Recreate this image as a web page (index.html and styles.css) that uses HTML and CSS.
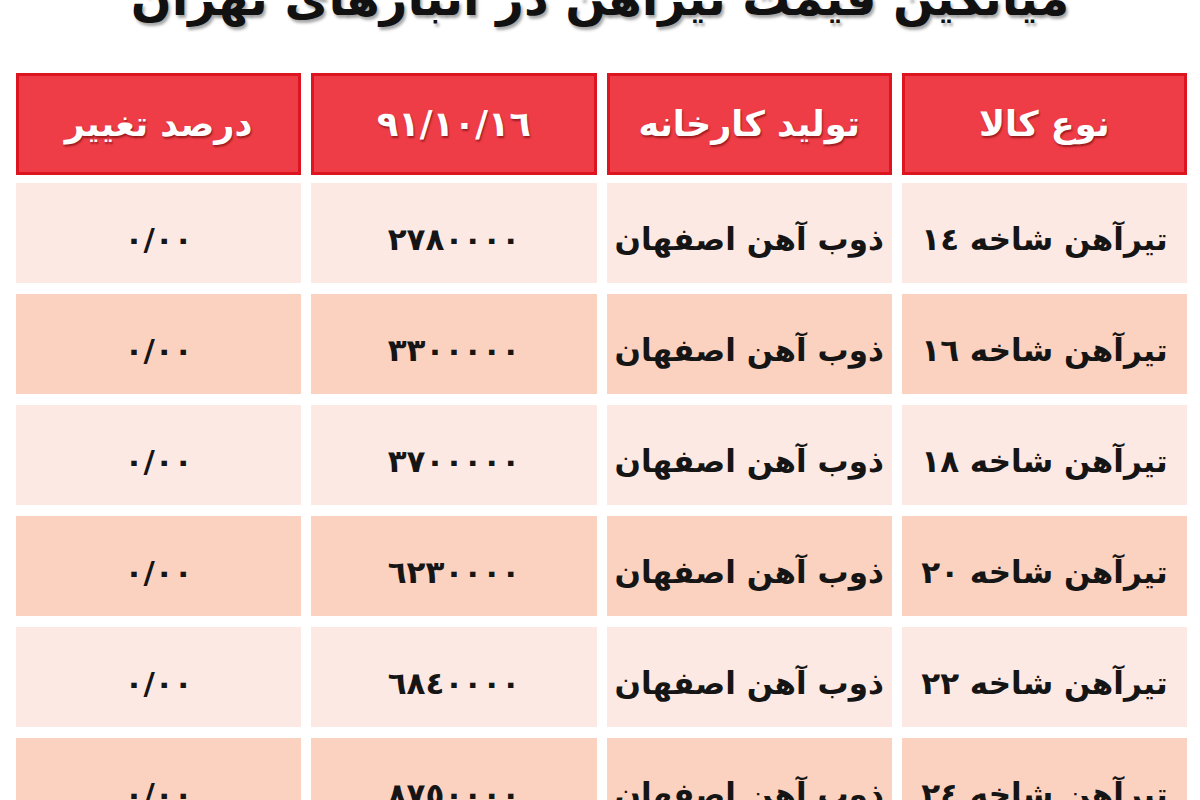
FILE: index.html
```html
<!DOCTYPE html>
<html lang="fa" dir="rtl">
<head>
<meta charset="utf-8">
<title>میانگین قیمت تیرآهن</title>
<link rel="stylesheet" href="styles.css">
</head>
<body>
<div class="title">میانگین قیمت تیرآهن در انبارهای تهران</div>
<div class="table">
  <div class="row head">
    <div class="cell">نوع کالا</div>
    <div class="cell">تولید کارخانه</div>
    <div class="cell">٩١/١٠/١٦</div>
    <div class="cell">درصد تغییر</div>
  </div>
  <div class="row light">
    <div class="cell">تیرآهن شاخه ١٤</div>
    <div class="cell">ذوب آهن اصفهان</div>
    <div class="cell">٢٧٨٠٠٠٠</div>
    <div class="cell">٠/٠٠</div>
  </div>
  <div class="row dark">
    <div class="cell">تیرآهن شاخه ١٦</div>
    <div class="cell">ذوب آهن اصفهان</div>
    <div class="cell">٣٣٠٠٠٠٠</div>
    <div class="cell">٠/٠٠</div>
  </div>
  <div class="row light">
    <div class="cell">تیرآهن شاخه ١٨</div>
    <div class="cell">ذوب آهن اصفهان</div>
    <div class="cell">٣٧٠٠٠٠٠</div>
    <div class="cell">٠/٠٠</div>
  </div>
  <div class="row dark">
    <div class="cell">تیرآهن شاخه ٢٠</div>
    <div class="cell">ذوب آهن اصفهان</div>
    <div class="cell">٦٢٣٠٠٠٠</div>
    <div class="cell">٠/٠٠</div>
  </div>
  <div class="row light">
    <div class="cell">تیرآهن شاخه ٢٢</div>
    <div class="cell">ذوب آهن اصفهان</div>
    <div class="cell">٦٨٤٠٠٠٠</div>
    <div class="cell">٠/٠٠</div>
  </div>
  <div class="row dark">
    <div class="cell">تیرآهن شاخه ٢٤</div>
    <div class="cell">ذوب آهن اصفهان</div>
    <div class="cell">٨٧٥٠٠٠٠</div>
    <div class="cell">٠/٠٠</div>
  </div>
</div>
</body>
</html>
```
FILE: styles.css
```css
html, body {
  margin: 0;
  padding: 0;
  background: #ffffff;
  overflow: hidden;
}
body {
  font-family: "DejaVu Sans", "Noto Sans", sans-serif;
  color: #151515;
}
.title {
  margin-top: -40px;
  height: 113px;
  line-height: 76px;
  font-size: 48px;
  font-weight: bold;
  text-align: center;
  color: #111;
  text-shadow: 2px 3px 3px rgba(0,0,0,0.35);
}
.table {
  display: flex;
  flex-direction: column;
  gap: 11px;
  padding: 0 13px 0 16px;
}
.row {
  display: grid;
  grid-template-columns: repeat(4, 1fr);
  column-gap: 10px;
  height: 100px;
}
.row.head {
  height: 102px;
  margin-bottom: -3px;
}
.cell {
  display: flex;
  align-items: center;
  justify-content: center;
  padding-top: 12px;
  box-sizing: border-box;
  font-size: 31px;
  font-weight: bold;
  white-space: nowrap;
  overflow: hidden;
}
.head .cell {
  background: #ef3d47;
  border: 3px solid #dc1520;
  padding-top: 0;
  color: #ffffff;
  font-size: 35px;
  text-shadow: 1px 2px 2px rgba(90,0,0,0.55);
}
.light .cell {
  background: #fde9e4;
}
.dark .cell {
  background: #fbd2c0;
}
```
